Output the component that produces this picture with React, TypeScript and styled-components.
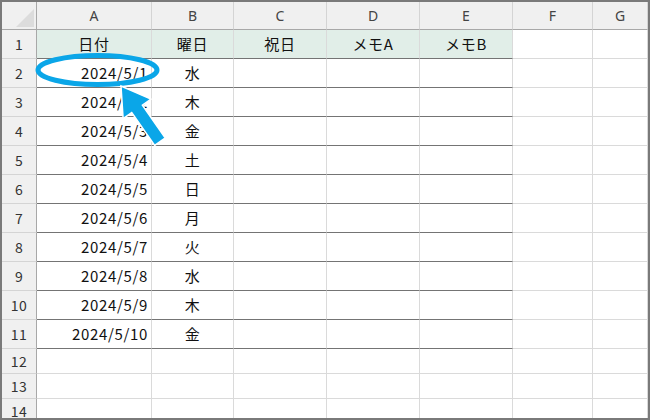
import React from 'react';
import styled, { createGlobalStyle } from 'styled-components';

const Global = createGlobalStyle`
  html, body { margin: 0; padding: 0; background: #fff; }
  body { font-family: "Noto Sans CJK JP", "Noto Sans", sans-serif; }
`;

const Frame = styled.div`
  width: 650px;
  height: 420px;
  box-sizing: border-box;
  border: 2px solid #7a7a7a;
  overflow: hidden;
  position: relative;
  background: #fff;
`;

const Sheet = styled.div`
  display: grid;
  grid-template-columns: 35px 115px 82px 93px 93px 93px 80px 1fr;
  grid-template-rows: 28px repeat(11, 29px) repeat(3, 25px);
`;

const Corner = styled.div`
  background: #f0f0f0;
  border-right: 1px solid #a8a8a8;
  border-bottom: 1px solid #a8a8a8;
  box-sizing: border-box;
  position: relative;
`;

const CornerMark = styled.span`
  position: absolute;
  left: 14px;
  top: 7px;
  width: 18px;
  height: 18px;
  background: #dcdcdc;
  clip-path: polygon(100% 0, 100% 100%, 0 100%);
`;

const ColHeader = styled.div`
  background: #f0f0f0;
  border-right: 1px solid #d4d4d4;
  border-bottom: 1px solid #a8a8a8;
  box-sizing: border-box;
  display: flex;
  align-items: center;
  justify-content: center;
  font-family: "Noto Sans", "Liberation Sans", sans-serif;
  font-size: 14px;
  color: #444;
`;

const RowHeader = styled.div`
  background: #f0f0f0;
  border-right: 1px solid #a8a8a8;
  border-bottom: 1px solid #d4d4d4;
  box-sizing: border-box;
  display: flex;
  align-items: center;
  justify-content: center;
  font-size: 14px;
  letter-spacing: 0.4px;
  color: #333;
`;

const Cell = styled.div<{ $head?: boolean; $table?: boolean; $align?: 'left' | 'center' | 'right' }>`
  background: ${(p) => (p.$head ? '#e1eee8' : '#fff')};
  border-right: 1px solid #dadada;
  border-bottom: 1px solid ${(p) => (p.$table ? '#747474' : '#dadada')};
  box-sizing: border-box;
  display: flex;
  align-items: center;
  justify-content: ${(p) => (p.$align === 'right' ? 'flex-end' : p.$align === 'left' ? 'flex-start' : 'center')};
  padding: 0 3px 1px;
  font-size: 15px;
  letter-spacing: 0.65px;
  color: #111;
  white-space: nowrap;
`;

const Overlay = styled.svg`
  position: absolute;
  left: -2px;
  top: -2px;
  width: 650px;
  height: 420px;
  pointer-events: none;
`;

const cols = ['A', 'B', 'C', 'D', 'E', 'F', 'G'];
const headers = ['日付', '曜日', '祝日', 'メモA', 'メモB'];
const days = ['水', '木', '金', '土', '日', '月', '火', '水', '木', '金'];

export default function App() {
  const rows: React.ReactNode[] = [];
  for (let r = 1; r <= 14; r++) {
    rows.push(<RowHeader key={`rh${r}`}>{r}</RowHeader>);
    for (let c = 0; c < 7; c++) {
      const inTable = c < 5 && r <= 11;
      let content: React.ReactNode = null;
      let align: 'left' | 'center' | 'right' = 'center';
      if (r === 1 && c < 5) content = headers[c];
      else if (r >= 2 && r <= 11 && c === 0) {
        content = `2024/5/${r - 1}`;
        align = 'right';
      } else if (r >= 2 && r <= 11 && c === 1) content = days[r - 2];
      rows.push(
        <Cell key={`c${r}-${c}`} $head={r === 1 && c < 5} $table={inTable} $align={align}>
          {content}
        </Cell>
      );
    }
  }
  return (
    <>
      <Global />
      <Frame>
        <Sheet>
          <Corner>
            <CornerMark />
          </Corner>
          {cols.map((c) => (
            <ColHeader key={c}>{c}</ColHeader>
          ))}
          {rows}
        </Sheet>
        <Overlay viewBox="0 0 650 420">
          <ellipse cx="97.5" cy="70" rx="59.5" ry="14.5" fill="none" stroke="#0aa6e8" strokeWidth="5" />
          <g transform="translate(121 86) rotate(235) translate(-68 0)">
            <path
              d="M0 -6.5 L40 -6.5 L40 -17 L68 0 L40 17 L40 6.5 L0 6.5 Z"
              fill="#0aa6e8"
              stroke="#fff"
              strokeWidth="1.5"
              strokeLinejoin="miter"
            />
          </g>
        </Overlay>
      </Frame>
    </>
  );
}
